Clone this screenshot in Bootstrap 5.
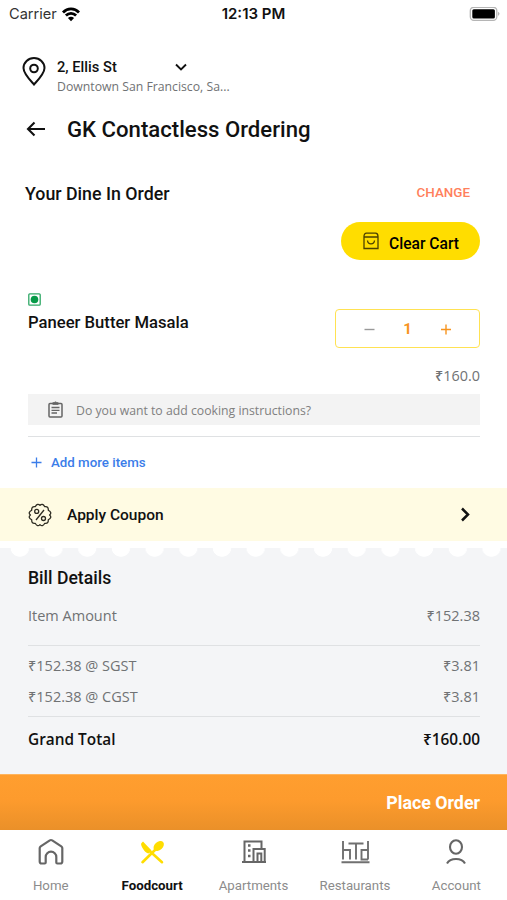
<!DOCTYPE html>
<html lang="en">
<head>
<meta charset="utf-8">
<meta name="viewport" content="width=device-width, initial-scale=1">
<title>GK Contactless Ordering</title>
<link href="https://cdn.jsdelivr.net/npm/bootstrap@5.3.0/dist/css/bootstrap.min.css" rel="stylesheet">
<style>
body{font-family:Roboto,"Liberation Sans",sans-serif;color:#111;line-height:1}
.screen{width:507px;height:900px;overflow:hidden;background:#fff}
.screen svg{display:block;flex:none}
.os{font-family:"Open Sans","Noto Sans",sans-serif}
.t{white-space:nowrap;line-height:20px}
.med{font-weight:500}
.grey{color:#707274}
.status{height:28px;font-family:Inter,sans-serif;padding:0 7px 0 9px}
.status>div{flex:1 1 0}
.carrier{font-size:14.6px;color:#333}
.clock{font-size:15px;font-weight:600;margin-right:2px}
.location{height:50px;margin-top:21px;padding-left:22px}
.pin{margin-top:8px}
.place-text{margin-left:11px}
.place{width:108px;font-size:14.7px}
.area{font-size:12.25px}
.title-row{height:38px;margin-top:11px;padding-left:26px}
.title-row .t{font-size:22.15px;margin-left:21px}
.order-row{height:38px;margin-top:26px;padding:0 37px 0 25px}
.order-row .t{font-size:17.8px}
.order-row .t:first-child{padding-top:1px}
.order-row .change{font-size:13.4px;color:#ff7f5c}
.clear{width:139px;height:38px;background:#fd0;border:0;font-size:15.6px;margin:10px 27px 0 auto;padding:5px 0 0 22px}
.clear svg{margin-top:-5px}
.clear .t{margin-left:10px}
.item{height:55px;margin-top:33px;padding:0 27px 0 28px}
.item-name{font-size:16.65px;margin-top:7px}
.stepper{width:145px;height:39px;margin-top:16px;border:1.5px solid #ffe252;border-radius:4px;padding:0 27px}
.stepper .t{color:#f7941e;font-size:15px;font-weight:700}
.price{height:20px;margin-top:18px;padding-right:27px;font-size:14.4px}
.note{height:31px;margin:8px 27px 0 28px;background:#f3f3f3;padding-left:20px;font-size:12.25px;color:#808080}
.note .t{margin-left:13px;padding-top:2px}
.rule{height:1px;margin:0 27px 0 28px;background:#dfe1e3}
.rule-item{margin-top:11px}
.more{height:51px;padding-left:31px;color:#3b7de9;font-size:13.3px}
.more .t{margin-left:9px}
.coupon{height:53px;background:#fffbe3;padding:1px 35px 0 28px;font-size:15.5px}
.coupon .t{margin-left:15px}
.scallop{height:11px;margin-top:7px;background:radial-gradient(ellipse 9.5px 9px at 16.85px 0,#fff 93%,transparent 100%) 3px 0/33.7px 11px repeat-x #f4f5f7}
.bill{height:215px;background:#f4f5f7;font-size:14.5px;padding-top:9px}
.bill-line{height:20px;padding:0 27px 0 28px}
.bill-title{font-family:Roboto,sans-serif;font-size:17.6px;color:#111}
.amount{margin:18px 0 19px}
.tax-a{margin:10px 0}
.tax-b{margin-top:11px;margin-bottom:9px}
.total{font-weight:600;color:#111;font-size:15.4px;margin-top:13px}
.place-order{height:56px;background:linear-gradient(#ff9e2f,#fd9b2d 45%,#ea9029);color:#fff;border-top:1px solid #ffb45c;padding:1px 27px 0 0;font-size:17.8px;font-weight:700}
.tabs{height:70px}
.tab{flex:1 1 0;color:#8c8c8c;font-size:13.25px}
.tab svg{margin-top:6px;margin-bottom:8px}
.tab.on .t{color:#111;font-weight:700}
</style>
<script src="https://cdn.jsdelivr.net/npm/bootstrap@5.3.0/dist/js/bootstrap.bundle.min.js"></script>
</head>
<body>
<main class="screen d-flex flex-column">
  <header class="status d-flex align-items-center flex-shrink-0">
    <div class="d-flex align-items-center"><span class="t carrier">Carrier</span>
      <svg class="ms-1" width="20" height="15" viewBox="0 0 20 15" fill="none" stroke="#000" stroke-width="2.800"><path d="M2 5.400C6.500.8 13.500.8 18 5.400M4.900 8.500c2.900-2.900 7.300-2.900 10.200 0"/><path d="M10 14.300 6.900 11c1.700-1.600 4.500-1.600 6.200 0z" fill="#000" stroke="none"/></svg></div>
    <span class="t clock">12:13 PM</span>
    <div class="d-flex justify-content-end"><svg width="31" height="15" viewBox="0 0 31 15"><rect x="1.300" y=".3" width="26.500" height="13" rx="3.500" fill="#fff" stroke="#b5b5b5" stroke-width="1.300"/><rect x="3.300" y="2.200" width="22.600" height="9.300" rx="1.500"/><path d="M29 4.700q3 2.100 0 4.200z" fill="#b5b5b5"/></svg></div>
  </header>

  <section class="location d-flex flex-shrink-0">
    <svg class="pin" width="24" height="29" viewBox="0 0 24 29" fill="none" stroke="#111" stroke-width="2"><path d="M12 27.500C7.500 22.500 1.500 16.500 1.500 11a10.500 10 0 0 1 21 0c0 5.500-6 11.500-10.500 16.500z"/><circle cx="12" cy="11.500" r="3.800"/></svg>
    <div class="place-text"><div class="d-flex align-items-center mt-2"><span class="t place med">2, Ellis St</span>
      <svg class="ms-2" width="16" height="16" viewBox="0 0 16 16" fill="none" stroke="#111" stroke-width="1.900"><path d="m3 5.500 5 5 5-5"/></svg></div>
      <div class="t area os grey">Downtown San Francisco, Sa...</div></div>
  </section>

  <div class="title-row d-flex align-items-center flex-shrink-0">
    <svg width="20" height="17" viewBox="0 0 20 17" fill="none" stroke="#111" stroke-width="2.100"><path d="M19 8H2M8.500 1.500 2 8l6.500 6.500"/></svg>
    <span class="t med">GK Contactless Ordering</span>
  </div>

  <div class="order-row d-flex align-items-center justify-content-between flex-shrink-0">
    <span class="t med">Your Dine In Order</span><span class="t med change">CHANGE</span>
  </div>

  <button class="clear rounded-pill d-flex align-items-center flex-shrink-0 med" type="button">
    <svg width="16" height="18" viewBox="0 0 16 18" fill="none" stroke="#4b4100" stroke-width="1.300"><path d="M1 4.500Q1 1.200 3.500 1.200h9Q15 1.200 15 4.500v12H1zM1 5h14M4.500 8.500c.4 4.500 6.600 4.500 7 0"/></svg>
    <span class="t">Clear Cart</span>
  </button>

  <section class="item d-flex justify-content-between flex-shrink-0">
    <div><svg width="13" height="13" viewBox="0 0 13 13"><rect x=".8" y=".8" width="11.400" height="11.400" rx="1" fill="#fff" stroke="#2fa866" stroke-width="1.300"/><circle cx="6.500" cy="6.500" r="3.800" fill="#069a48"/></svg>
      <div class="t item-name med">Paneer Butter Masala</div></div>
    <div class="stepper d-flex align-items-center justify-content-between">
      <svg width="12" height="12" viewBox="0 0 12 12" stroke="#999" stroke-width="1.400"><path d="M1.500 6.500h10"/></svg>
      <span class="t">1</span>
      <svg width="12" height="12" viewBox="0 0 12 12" stroke="#f7941e" stroke-width="1.400"><path d="M1 6.500h10M6 1.500v10"/></svg>
    </div>
  </section>
  <div class="price t os med grey text-end flex-shrink-0">₹160.0</div>

  <div class="note os d-flex align-items-center flex-shrink-0">
    <svg width="15" height="17" viewBox="0 0 15 17" fill="none" stroke="#666" stroke-width="1.500"><rect x="1" y="2.500" width="13" height="13.500" rx="1"/><path d="M3.500 6.500h8M3.500 9.300h8M3.500 12h5.500" stroke-width="1.300"/><path d="M4.800 3.300V1.800h1.400a1.400 1.400 0 0 1 2.600 0h1.400v1.500z" fill="#666" stroke-width="1"/></svg>
    <span class="t">Do you want to add cooking instructions?</span>
  </div>
  <div class="rule rule-item flex-shrink-0"></div>
  <div class="more d-flex align-items-center flex-shrink-0 med">
    <svg width="11" height="11" viewBox="0 0 11 11" stroke="#3b7de9" stroke-width="1.300"><path d="M.5 5.500h10M5.500.5v10"/></svg>
    <span class="t">Add more items</span>
  </div>

  <div class="coupon d-flex align-items-center flex-shrink-0 med">
    <svg width="24" height="24" viewBox="0 0 24 24" fill="none" stroke="#2d2b21" stroke-width="1.300"><path stroke-linejoin="round" d="M12 2.400Q14.500-.3 16.800 3.700 20.500 3 20.300 7.200q4.200 2.300 1.300 4.800 2.900 2.500-1.300 4.800.2 4.200-3.500 3.500-2.300 4-4.800 1.300-2.500 2.700-4.800-1.300-3.700.7-3.500-3.500Q-.5 14.500 2.400 12-.5 9.500 3.700 7.200 3.500 3 7.200 3.700 9.500-.3 12 2.400z"/><circle cx="8.700" cy="8.400" r="2"/><circle cx="15.500" cy="15.500" r="2"/><path d="m16 7-8 10"/></svg>
    <span class="t me-auto">Apply Coupon</span>
    <svg width="14" height="18" viewBox="0 0 14 18" fill="none" stroke="#111" stroke-width="2.500"><path d="m4 2.500 6 6-6 6"/></svg>
  </div>

  <div class="scallop flex-shrink-0"></div>
  <section class="bill os grey flex-shrink-0">
    <div class="bill-line"><div class="t bill-title med">Bill Details</div></div>
    <div class="bill-line amount d-flex justify-content-between t"><span>Item Amount</span><span>₹152.38</span></div>
    <div class="rule"></div>
    <div class="bill-line tax-a d-flex justify-content-between t"><span>₹152.38 @ SGST</span><span>₹3.81</span></div>
    <div class="bill-line tax-b d-flex justify-content-between t"><span>₹152.38 @ CGST</span><span>₹3.81</span></div>
    <div class="rule"></div>
    <div class="bill-line total d-flex justify-content-between t"><span>Grand Total</span><span>₹160.00</span></div>
  </section>

  <div class="place-order d-flex align-items-center justify-content-end flex-shrink-0"><span class="t">Place Order</span></div>

  <nav class="tabs d-flex flex-shrink-0">
    <div class="tab d-flex flex-column align-items-center">
      <svg width="32" height="32" viewBox="0 0 32 32" fill="none" stroke="#666" stroke-width="2.200" stroke-linejoin="round"><path d="M4.700 12q0-1 1-1.700L14.800 4.400q1.200-.8 2.400 0l9.100 5.900q1 .7 1 1.700v13.500q0 2-2 2h-3q-1 0-1-1V21a5 5 0 0 0-10.600 0v5.500q0 1-1 1h-3q-2 0-2-2z"/></svg>
      <span class="t">Home</span></div>
    <div class="tab on d-flex flex-column align-items-center">
      <svg width="32" height="32" viewBox="0 0 32 32" fill="#fd0" stroke="#fd0"><path d="M7 5.500 15.500 14.500 12.500 17.500Q9.500 17 6.800 12.500 4.500 8.800 5.300 7.200z" stroke="none"/><path d="m12 13.500 14 12.700M6.500 26.200 20 13" stroke-width="2.600" stroke-linecap="round"/><ellipse cx="22.700" cy="10" rx="6" ry="4.100" transform="rotate(-43 22.700 10)" stroke="none"/></svg>
      <span class="t">Foodcourt</span></div>
    <div class="tab d-flex flex-column align-items-center">
      <svg width="32" height="32" viewBox="0 0 32 32" fill="none" stroke="#666" stroke-width="2"><path d="M4 26h24M6.500 26V5.500h17V12M15.500 26V13h11.200v13M19.500 26v-8.500h3.800V26"/><path d="M10 9.500h2.500M10 14.500h2.500M10 20h2.500" stroke-width="2.500"/></svg>
      <span class="t">Apartments</span></div>
    <div class="tab d-flex flex-column align-items-center">
      <svg width="32" height="32" viewBox="0 0 32 32" fill="none" stroke="#707070" stroke-width="1.900"><path d="M2.500 26.200h28M4 5v18.500M4 14h7v9.500M9.500 7.500h15M17 7.500v16M29 5v18.500M29 14h-6.500v9.500H29"/></svg>
      <span class="t">Restaurants</span></div>
    <div class="tab d-flex flex-column align-items-center">
      <svg width="32" height="32" viewBox="0 0 32 32" fill="none" stroke="#666" stroke-width="2.100"><ellipse cx="16" cy="11" rx="6" ry="6.700"/><path d="M7 27.500q2.500-4.500 9-4.500t9 4.500"/></svg>
      <span class="t">Account</span></div>
  </nav>
</main>
</body>
</html>
